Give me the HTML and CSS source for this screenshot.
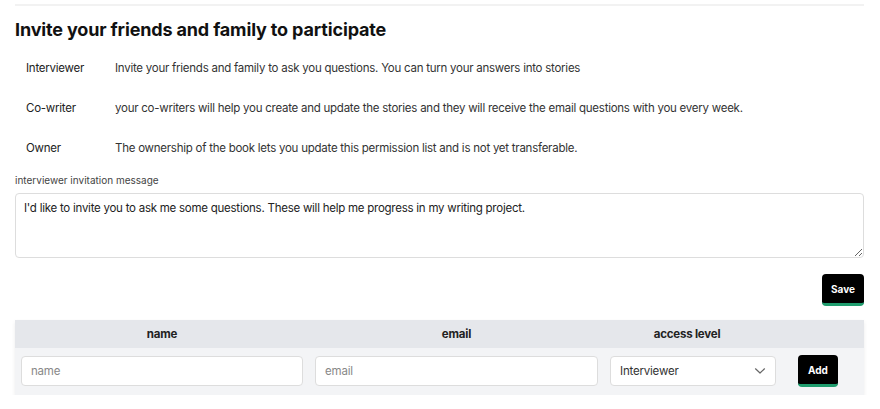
FILE: index.html
```html
<!DOCTYPE html>
<html>
<head>
<meta charset="utf-8">
<link rel="stylesheet" href="styles.css">
</head>
<body>
<div class="page">
  <div class="rule"></div>
  <h1 class="title">Invite your friends and family to participate</h1>
  <div class="roles">
    <div class="role"><span class="role-name">Interviewer</span><span class="role-desc">Invite your friends and family to ask you questions. You can turn your answers into stories</span></div>
    <div class="role"><span class="role-name">Co-writer</span><span class="role-desc">your co-writers will help you create and update the stories and they will receive the email questions with you every week.</span></div>
    <div class="role"><span class="role-name">Owner</span><span class="role-desc">The ownership of the book lets you update this permission list and is not yet transferable.</span></div>
  </div>
  <label class="msg-label">interviewer invitation message</label>
  <textarea class="msg">I'd like to invite you to ask me some questions. These will help me progress in my writing project.</textarea>
  <div class="save-row"><button class="btn">Save</button></div>
  <div class="table">
    <div class="thead">
      <div class="th">name</div>
      <div class="th">email</div>
      <div class="th">access level</div>
      <div class="th"></div>
    </div>
    <div class="trow">
      <div class="td"><input class="field" placeholder="name"></div>
      <div class="td"><input class="field" placeholder="email"></div>
      <div class="td">
        <div class="select">
          <span>Interviewer</span>
          <svg width="12" height="8" viewBox="0 0 12 8"><path d="M1.5 1.8 L6 6 L10.5 1.8" fill="none" stroke="#666" stroke-width="1.2" stroke-linecap="round" stroke-linejoin="round"/></svg>
        </div>
      </div>
      <div class="td td-add"><button class="btn btn-add">Add</button></div>
    </div>
  </div>
</div>
</body>
</html>
```

FILE: styles.css
```css
* { box-sizing: border-box; }
html, body { margin: 0; padding: 0; background: #fff; }
body { font-family: Inter, "Noto Sans", sans-serif; color: #222; }
.page { padding: 4px 16px 0 15px; }
.rule { height: 2px; background: #f2f2f2; }
.title { margin: 13px 0 0; font-size: 18px; font-weight: 700; color: #111; line-height: 22px; letter-spacing: -0.15px; }
.roles { margin-top: 19px; display: flex; flex-direction: column; gap: 24px; padding-left: 11px; }
.role { display: flex; font-size: 11.5px; letter-spacing: -0.25px; line-height: 16px; color: #222; }
.role-name { width: 89px; flex: none; }
.role-desc { color: #333; }
.msg-label { display: block; margin-top: 17px; font-size: 10px; line-height: 14px; color: #444; }
.msg { display: block; width: 100%; height: 65px; margin-top: 6px; padding: 6px 8px; border: 1px solid #ddd; border-radius: 4px; font-family: inherit; font-size: 11.5px; letter-spacing: -0.25px; line-height: 16px; color: #222; resize: vertical; background: #fff; }
.save-row { display: flex; justify-content: flex-end; margin-top: 16px; }
.btn { background: #000; color: #fff; border: none; border-bottom: 3px solid #1f9d6e; border-radius: 4px; font-family: inherit; font-weight: 700; font-size: 10px; padding: 0 9px; height: 32px; }
.table { margin-top: 14px; box-shadow: 0 2px 4px rgba(0,0,0,0.08); }
.thead { display: grid; grid-template-columns: 294px 295px 166px 1fr; }
.trow { display: grid; grid-template-columns: 294px 295px 178px 1fr; }
.thead { background: #e5e7eb; height: 28px; align-items: center; }
.th { text-align: center; font-weight: 700; font-size: 11.5px; letter-spacing: -0.2px; color: #222; }
.trow { background: #f3f4f6; padding: 7px 0 8px; align-items: center; }
.td { padding: 0 6px; }
.field { display: block; width: 100%; height: 30px; border: 1px solid #ddd; border-radius: 4px; background: #fff; padding: 0 9px; font-family: inherit; font-size: 11.5px; letter-spacing: -0.2px; color: #222; }
.field::placeholder { color: #888; }
.select { height: 30px; border: 1px solid #ddd; border-radius: 4px; background: #fff; display: flex; align-items: center; justify-content: space-between; padding: 0 9px 0 9px; font-size: 11.5px; letter-spacing: -0.2px; color: #333; }
.td-add { padding-left: 16px; }
.btn-add { height: 32px; padding: 0 10px; }
```
